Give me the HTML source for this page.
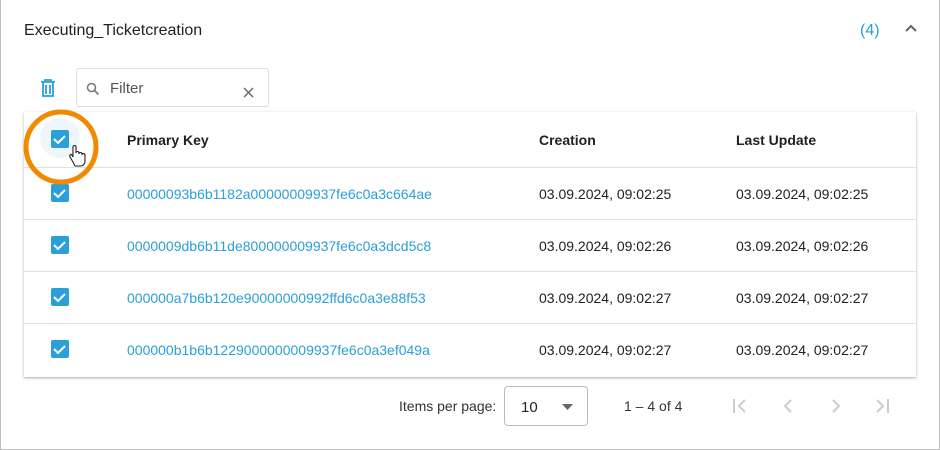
<!DOCTYPE html>
<html><head><style>
*{box-sizing:border-box;margin:0;padding:0}
body{width:940px;height:450px;background:#fff;font-family:"Liberation Sans",sans-serif;position:relative;overflow:hidden}
.frame{position:absolute;left:0;top:0;width:940px;height:450px;border:1px solid #bdbdbd;border-top:none}
.title{position:absolute;left:24px;top:22px;font-size:16px;color:#212121}
.count{position:absolute;left:860px;top:22px;font-size:16px;color:#2a9fd8}
.filter{position:absolute;left:76px;top:68px;width:193px;height:39px;border:1px solid #ddd;border-radius:3px}
.filter span{position:absolute;left:33px;top:11px;font-size:15px;color:#555}
.table{position:absolute;left:24px;top:112px;width:892px;height:265px;box-shadow:0 1px 3px rgba(0,0,0,.25),0 1px 1px rgba(0,0,0,.1);background:#fff}
.row{position:absolute;left:0;width:892px;border-bottom:1px solid #e0e0e0}
.cell{position:absolute;font-size:14px;color:#212121;white-space:nowrap}
.hdr .cell{font-weight:bold}
.link{color:#2a9fd8}
.cb{position:absolute;left:27px;width:18px;height:18px;background:#2a9fd8;border-radius:2px}
.pag{position:absolute;font-size:14px;color:#333}
.sel{position:absolute;left:504px;top:386px;width:84px;height:40px;border:1px solid #bbb;border-radius:4px}
</style></head><body>
<div class="frame"></div>
<div class="title">Executing_Ticketcreation</div>
<div class="count">(4)</div>
<svg style="position:absolute;left:903px;top:22px" width="16" height="12"><path d="M3 9 L8 4 L13 9" stroke="#666" stroke-width="2" fill="none"/></svg>
<svg style="position:absolute;left:38px;top:78px" width="20" height="20"><path d="M3 4h14M7 4V2h6v2M5 4v14h10V4M8 7v9M12 7v9" stroke="#2a9fd8" stroke-width="1.8" fill="none"/></svg>
<div class="filter"><svg style="position:absolute;left:9px;top:13px" width="14" height="14"><circle cx="5.5" cy="5.5" r="4" stroke="#777" stroke-width="1.5" fill="none"/><path d="M8.5 8.5l4 4" stroke="#777" stroke-width="1.6"/></svg><span>Filter</span><svg style="position:absolute;left:166px;top:18px" width="12" height="12"><path d="M1 1l9 9M10 1l-9 9" stroke="#666" stroke-width="1.4"/></svg></div>
<div class="table">
<div class="row hdr" style="top:0;height:56px"><div class="cell" style="left:103px;top:20px">Primary Key</div><div class="cell" style="left:515px;top:20px">Creation</div><div class="cell" style="left:712px;top:20px">Last Update</div></div>
<div class="row" style="top:56px;height:52px"><div class="cell link" style="left:103px;top:18px">00000093b6b1182a00000009937fe6c0a3c664ae</div><div class="cell" style="left:515px;top:18px">03.09.2024, 09:02:25</div><div class="cell" style="left:712px;top:18px">03.09.2024, 09:02:25</div></div>
<div class="row" style="top:108px;height:52px"><div class="cell link" style="left:103px;top:18px">0000009db6b11de800000009937fe6c0a3dcd5c8</div><div class="cell" style="left:515px;top:18px">03.09.2024, 09:02:26</div><div class="cell" style="left:712px;top:18px">03.09.2024, 09:02:26</div></div>
<div class="row" style="top:160px;height:52px"><div class="cell link" style="left:103px;top:18px">000000a7b6b120e90000000992ffd6c0a3e88f53</div><div class="cell" style="left:515px;top:18px">03.09.2024, 09:02:27</div><div class="cell" style="left:712px;top:18px">03.09.2024, 09:02:27</div></div>
<div class="row" style="top:212px;height:53px;border:none"><div class="cell link" style="left:103px;top:18px">000000b1b6b1229000000009937fe6c0a3ef049a</div><div class="cell" style="left:515px;top:18px">03.09.2024, 09:02:27</div><div class="cell" style="left:712px;top:18px">03.09.2024, 09:02:27</div></div>
</div>
<div style="position:absolute;left:40px;top:118px;width:40px;height:40px;border-radius:50%;background:#eef6fc"></div>
<div class="cb" style="left:51px;top:130px"></div>
<div class="cb" style="left:51px;top:184px"></div>
<div class="cb" style="left:51px;top:236px"></div>
<div class="cb" style="left:51px;top:288px"></div>
<div class="cb" style="left:51px;top:340px"></div>
<svg style="position:absolute;left:0;top:0" width="940" height="450">
<g fill="none" stroke="#fff" stroke-width="2"><path d="M54 139l4 4 7-7"/><path d="M54 193l4 4 7-7"/><path d="M54 245l4 4 7-7"/><path d="M54 297l4 4 7-7"/><path d="M54 349l4 4 7-7"/></g>
<circle cx="61" cy="147" r="35" fill="none" stroke="#f08a00" stroke-width="5"/>
<path d="M73 162 l-3-5 c-1-2 1-3 2-2 l1 2 v-10 c0-2 3-2 3 0 v6 c0-2 3-2 3 0 v1 c0-2 3-2 3 0 v1 c0-2 3-2 3 0 v6 c0 3-2 5-4 5 h-6z" fill="#fff" stroke="#222" stroke-width="1.1"/>
</svg>
<div class="pag" style="left:399px;top:398px">Items per page:</div>
<div class="sel"><span style="position:absolute;left:16px;top:12px;font-size:15px;color:#222">10</span><svg style="position:absolute;left:57px;top:17px" width="12" height="7"><path d="M0 0h11L5.5 6z" fill="#666"/></svg></div>
<div class="pag" style="left:624px;top:398px">1 – 4 of 4</div>
<svg style="position:absolute;left:728px;top:395px" width="170" height="22" fill="none" stroke="#ccc" stroke-width="2"><path d="M6 4v14M17 5l-6 6 6 6"/><path d="M63 5l-6 6 6 6"/><path d="M105 5l6 6-6 6"/><path d="M149 5l6 6-6 6M160 4v14"/></svg>
</body></html>
